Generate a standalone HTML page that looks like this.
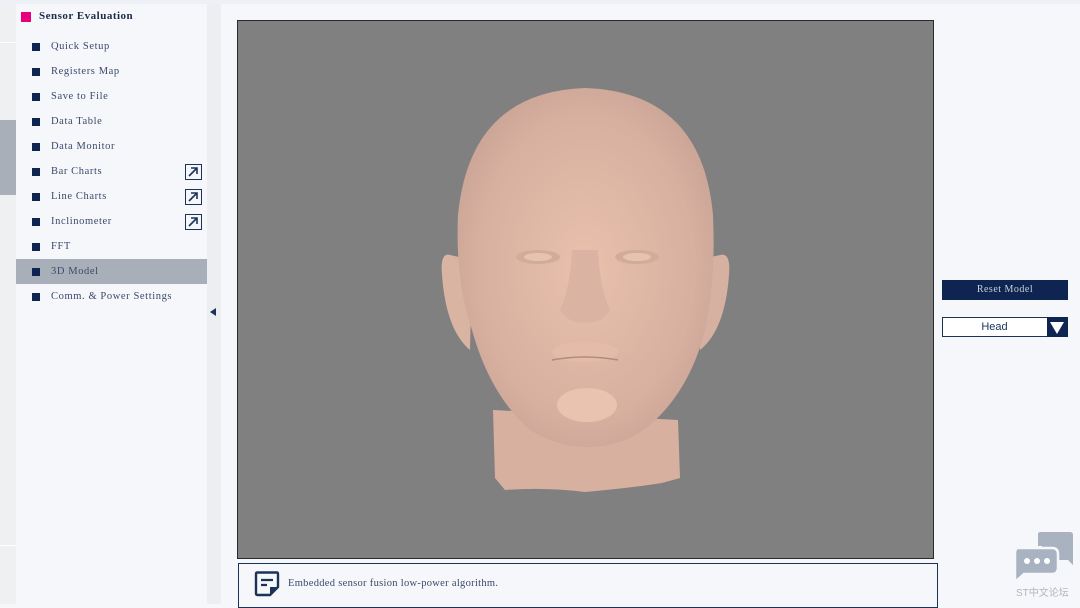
<!DOCTYPE html>
<html><head><meta charset="utf-8"><style>
*{margin:0;padding:0;box-sizing:border-box}
body{width:1080px;height:604px;overflow:hidden;background:#f5f7fa;position:relative;font-family:"Liberation Mono","DejaVu Sans Mono",monospace}
.abs{position:absolute}
.item{position:absolute;left:16px;width:191px;height:25px;font-size:10.5px;color:#3a4a6b;font-family:"Liberation Serif",serif;letter-spacing:.6px}
.item .b{position:absolute;left:16px;top:8px;width:8px;height:8px;background:#0d2550}
.item span{position:absolute;left:35px;top:6px}
.ext{position:absolute;left:169px;top:4px;width:17px;height:16px;border:1.5px solid #1c3358}
</style></head><body>
<div class="abs" style="left:0;top:0;width:1080px;height:4px;background:#edf0f4"></div>
<div class="abs" style="left:0;top:4px;width:16px;height:600px;background:#eef0f2"></div>
<div class="abs" style="left:0;top:42px;width:16px;height:1px;background:#fff"></div>
<div class="abs" style="left:0;top:120px;width:16px;height:75px;background:#a8afb8"></div>
<div class="abs" style="left:0;top:545px;width:16px;height:1px;background:#fff"></div>
<div class="abs" style="left:16px;top:4px;width:191px;height:600px;background:#f5f7fa"></div>
<div class="abs" style="left:207px;top:4px;width:14px;height:600px;background:#eceef1"></div>
<div class="abs" style="left:210px;top:308px;width:0;height:0;border-top:4px solid transparent;border-bottom:4px solid transparent;border-right:6px solid #1c3358"></div>
<div class="abs" style="left:21px;top:12px;width:10px;height:10px;background:#e6007e"></div>
<div class="abs" style="left:39px;top:10px;font-size:11px;color:#1c2b48;font-family:'Liberation Serif',serif;font-weight:bold;letter-spacing:.5px">Sensor Evaluation</div>
<div class="item" style="top:35px"><div class="b"></div><span>Quick Setup</span></div>
<div class="item" style="top:60px"><div class="b"></div><span>Registers Map</span></div>
<div class="item" style="top:85px"><div class="b"></div><span>Save to File</span></div>
<div class="item" style="top:110px"><div class="b"></div><span>Data Table</span></div>
<div class="item" style="top:135px"><div class="b"></div><span>Data Monitor</span></div>
<div class="item" style="top:160px"><div class="b"></div><span>Bar Charts</span><div class="ext"><svg width="14" height="13" viewBox="0 0 14 13"><path d="M3 11L11 3M5 3H11V9" stroke="#1c3358" stroke-width="1.6" fill="none"/></svg></div></div>
<div class="item" style="top:185px"><div class="b"></div><span>Line Charts</span><div class="ext"><svg width="14" height="13" viewBox="0 0 14 13"><path d="M3 11L11 3M5 3H11V9" stroke="#1c3358" stroke-width="1.6" fill="none"/></svg></div></div>
<div class="item" style="top:210px"><div class="b"></div><span>Inclinometer</span><div class="ext"><svg width="14" height="13" viewBox="0 0 14 13"><path d="M3 11L11 3M5 3H11V9" stroke="#1c3358" stroke-width="1.6" fill="none"/></svg></div></div>
<div class="item" style="top:235px"><div class="b"></div><span>FFT</span></div>
<div class="item" style="top:259px;background:#a8afb8"><div class="b" style="top:9px"></div><span style="top:7px">3D Model</span></div>
<div class="item" style="top:285px"><div class="b"></div><span>Comm. &amp; Power Settings</span></div>

<div class="abs" style="left:237px;top:20px;width:697px;height:539px;background:#808080;border:1.5px solid #2a2a2a"></div>
<svg class="abs" style="left:0;top:0" width="1080" height="604">
<defs>
<radialGradient id="sk" cx="50%" cy="50%" r="60%"><stop offset="0" stop-color="#e8c0ac"/><stop offset=".7" stop-color="#d8b0a0"/><stop offset="1" stop-color="#c5a092"/></radialGradient>
</defs>
<path d="M493 410 L495 478 L505 490 Q545 487 585 492 Q630 488 662 483 L680 478 L678 420 Z" fill="#d8b09f"/>
<path d="M450 255 Q440 252 442 275 Q446 330 470 350 L472 260 Z" fill="#d9b4a3"/>
<path d="M720 255 Q731 252 729 275 Q725 330 700 350 L698 260 Z" fill="#d6b1a1"/>
<path d="M585 88 Q470 92 458 215 Q455 280 472 330 Q490 395 530 430 Q560 448 590 447 Q625 446 650 425 Q690 390 705 330 Q716 280 713 215 Q702 92 585 88 Z" fill="url(#sk)"/>
<ellipse cx="538" cy="257" rx="22" ry="7" fill="#d3ab9a"/><ellipse cx="538" cy="257" rx="14" ry="4" fill="#e6c2b0"/>
<ellipse cx="637" cy="257" rx="22" ry="7" fill="#d3ab9a"/><ellipse cx="637" cy="257" rx="14" ry="4" fill="#e6c2b0"/>
<path d="M572 250 Q570 290 560 310 Q570 325 585 322 Q600 325 610 310 Q600 290 598 250 Z" fill="#dbb3a2"/>
<ellipse cx="585" cy="352" rx="33" ry="10" fill="#e3bba8"/>
<path d="M552 360 Q585 354 618 360" stroke="#b08a7a" stroke-width="1.5" fill="none"/>
<ellipse cx="587" cy="405" rx="30" ry="17" fill="#e9c3b0"/>
</svg>

<div class="abs" style="left:238px;top:563px;width:700px;height:45px;border:1.2px solid #1c3358;background:#f5f7fa"></div>
<svg class="abs" style="left:254px;top:571px" width="26" height="26" viewBox="0 0 26 26"><path d="M2 3Q2 1.5 3.5 1.5H22.5Q24 1.5 24 3V16L16 24H3.5Q2 24 2 22.5Z" fill="none" stroke="#1c3358" stroke-width="2.4"/><path d="M7 9H19M7 14H13" stroke="#1c3358" stroke-width="2.2"/><path d="M16 24V16H24Z" fill="#1c3358"/></svg>
<div class="abs" style="left:288px;top:578px;font-size:10.5px;color:#3a4a6b;font-family:'Liberation Serif',serif;letter-spacing:.3px">Embedded sensor fusion low-power algorithm.</div>

<div class="abs" style="left:942px;top:280px;width:126px;height:20px;background:#0d2550;color:#c8d0dc;font-size:10px;text-align:center;line-height:20px;font-family:'Liberation Serif',serif;letter-spacing:.5px">Reset Model</div>
<div class="abs" style="left:942px;top:317px;width:126px;height:20px;background:#fff;border:1.2px solid #1c3358"></div>
<div class="abs" style="left:942px;top:317px;width:105px;height:20px;font-family:'Liberation Sans',sans-serif;font-size:11px;color:#1c3358;text-align:center;line-height:20px">Head</div>
<div class="abs" style="left:1047px;top:317px;width:21px;height:20px;background:#0d2550"></div>
<div class="abs" style="left:1050px;top:322px;width:0;height:0;border-left:7px solid transparent;border-right:7px solid transparent;border-top:12px solid #fff"></div>

<svg class="abs" style="left:1012px;top:532px" width="64" height="52" viewBox="0 0 64 52">
<path d="M26 2Q26 0 29 0H58Q61 0 61 3V33L56 28H30V14H26Z" fill="#a9b2c1"/>
<path d="M6 16H40Q46 16 46 22V36Q46 42 40 42H12L3 50V22Q3 16 6 16Z" fill="#a9b2c1" stroke="#f5f7fa" stroke-width="2.5"/>
<circle cx="15" cy="29" r="3" fill="#fff"/><circle cx="25" cy="29" r="3" fill="#fff"/><circle cx="35" cy="29" r="3" fill="#fff"/>
</svg>
<div class="abs" style="left:1016px;top:584px;font-family:'Liberation Sans','Noto Sans CJK SC',sans-serif;font-size:10px;color:#b0b6c0">ST中文论坛</div>
</body></html>
